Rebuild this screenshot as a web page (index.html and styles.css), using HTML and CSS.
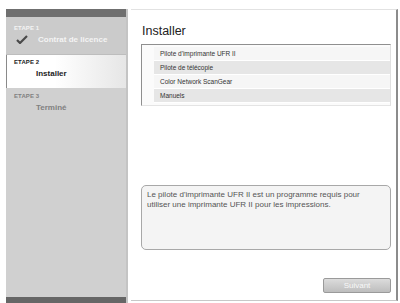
FILE: index.html
```html
<!DOCTYPE html>
<html lang="fr">
<head>
  <meta charset="UTF-8" />
  <meta name="viewport" content="width=device-width, initial-scale=1.0" />
  <title>Installer</title>
  <link rel="stylesheet" href="styles.css">
</head>
<body>
  <div class="window">
    <div class="sidebar">
      <div class="bar"></div>
      <div class="step done">
        <div class="step-label">ETAPE 1</div>
        <div class="step-name">
          <svg class="check" width="12" height="9" viewBox="0 0 12 9">
            <path d="M1 5 L4 8 L11 1" fill="none" stroke="#4a4a4a" stroke-width="2.2" />
          </svg>
          Contrat de licence
        </div>
      </div>
      <div class="step current">
        <div class="step-label">ETAPE 2</div>
        <div class="step-name">Installer</div>
      </div>
      <div class="step todo">
        <div class="step-label">ETAPE 3</div>
        <div class="step-name">Terminé</div>
      </div>
      <div class="filler"></div>
      <div class="bar bottom"></div>
    </div>

    <div class="main">
      <h1>Installer</h1>
      <ul class="components">
        <li>Pilote d'imprimante UFR II</li>
        <li>Pilote de télécopie</li>
        <li>Color Network ScanGear</li>
        <li>Manuels</li>
      </ul>
      <div class="spacer"></div>
      <div class="description">
        Le pilote d'imprimante UFR II est un programme requis pour
        utiliser une imprimante UFR II pour les impressions.
      </div>
      <div class="actions">
        <button disabled>Suivant</button>
      </div>
    </div>
  </div>
</body>
</html>
```

FILE: styles.css
```css
/* General */
body {
  margin: 0;
  background: #fff;
  font-family: "Liberation Sans", Arial, sans-serif;
  color: #333;
}

.window {
  display: flex;
  height: 303px;
  padding: 9px 0 0 6px;
  box-sizing: border-box;
}

/* Sidebar with steps */
.sidebar {
  width: 122px;
  display: flex;
  flex-direction: column;
  background: #d0d0d0;
  border-right: 2px solid #c4c4c4;
  box-sizing: border-box;
}

.bar {
  height: 8px;
  background: #6f6f6f;
}

.bar.bottom {
  height: 6px;
  background: #666;
}

.filler {
  flex: 1;
}

.step {
  padding: 0 0 0 8px;
  font-weight: bold;
}

.step-label {
  font-size: 6px;
  letter-spacing: 0.1px;
}

.step-name {
  font-size: 8px;
  display: flex;
  align-items: center;
}

.step.done {
  height: 38px;
  background: #cbcbcb;
  color: #f4f4f4;
  border-bottom: 1px solid #bdbdbd;
  box-sizing: border-box;
  padding-top: 8px;
}

.step.done .step-name {
  margin-top: 4px;
  padding-left: 2px;
}

.check {
  margin-right: 10px;
}

.step.current {
  height: 33px;
  background: linear-gradient(90deg, #ffffff 40%, #e6e6e6);
  color: #222;
  border-left: 1px solid #8a8a8a;
  padding-left: 7px;
  padding-top: 4px;
  box-sizing: border-box;
}

.step.current .step-name,
.step.todo .step-name {
  padding-left: 22px;
  margin-top: 4px;
}

.step.todo {
  padding-top: 5px;
  color: #808080;
}

/* Main panel */
.main {
  width: 267px;
  margin-left: 3px;
  margin-bottom: 2px;
  display: flex;
  flex-direction: column;
  border-top: 1px solid #e2e2e2;
  border-bottom: 1px solid #c8c8c8;
  border-right: 2px solid #8c8c8c;
  box-sizing: border-box;
  padding: 0 5px 7px 10px;
}

h1 {
  font-size: 12.5px;
  font-weight: normal;
  color: #222;
  margin: 14px 0 6px 1px;
}

.components {
  list-style: none;
  margin: 0;
  padding: 2px 0 2px 12px;
  border-top: 1px solid #8f8f8f;
  border-left: 1px solid #8f8f8f;
  border-right: 1px solid #e0e0e0;
  border-bottom: 1px solid #e4e4e4;
  background: #fbfbfb;
}

.components li {
  font-size: 6.5px;
  color: #333;
  height: 13px;
  line-height: 13px;
  padding-left: 6px;
  border-bottom: 1px solid #fff;
  background: #f6f6f6;
}

.components li:nth-child(even) {
  background: #e6e6e6;
}

.spacer {
  flex: 1;
}

.description {
  height: 65px;
  box-sizing: border-box;
  border: 1px solid #a8a8a8;
  border-radius: 5px;
  background: #f4f4f4;
  padding: 4px 5px;
  font-size: 8px;
  line-height: 10px;
  color: #555;
}

.actions {
  display: flex;
  justify-content: flex-end;
  margin-top: 28px;
}

button {
  width: 68px;
  height: 15px;
  padding: 0;
  font-family: inherit;
  font-size: 8px;
  color: #f8f8f8;
  background: linear-gradient(#dcdcdc, #bdbdbd);
  border: 1px solid #9a9a9a;
  border-radius: 2px;
}
```
